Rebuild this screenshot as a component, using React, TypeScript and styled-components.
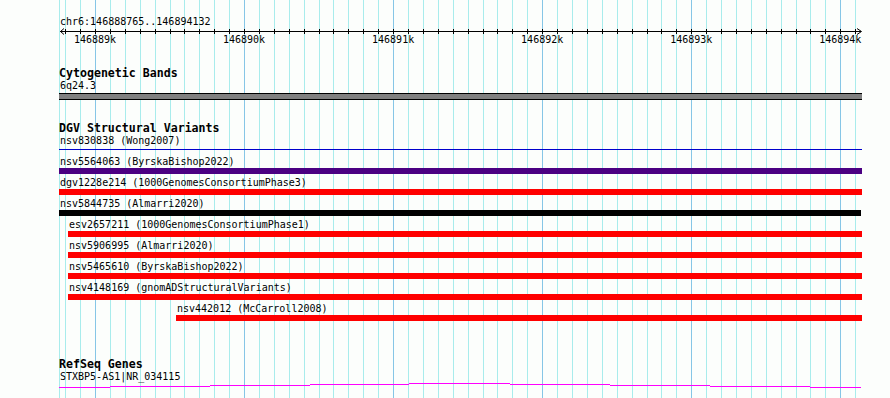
import React from 'react';
import styled, { createGlobalStyle } from 'styled-components';

const PANEL_W = 803;
const MAJOR0 = 36; // 146889k, panel-local x
const MINOR = 14.906;

const GlobalStyle = createGlobalStyle`
  html, body {
    margin: 0;
    padding: 0;
    background: #fcfefc;
  }
  body {
    font-family: "DejaVu Sans Mono", "Liberation Mono", monospace;
    color: #000;
  }
`;

const Page = styled.div`
  width: 890px;
  height: 398px;
  box-sizing: border-box;
  padding-left: 59px;
  overflow: hidden;
  background: #fcfefc;
`;

const Panel = styled.div`
  position: relative;
  width: ${PANEL_W}px;
  height: 398px;
`;

const GridLayer = styled.svg`
  position: absolute;
  left: 0;
  top: 0;
  display: block;
`;

const Tracks = styled.div`
  position: relative;
  display: flex;
  flex-direction: column;
  padding-top: 16px;
`;

const Label = styled.div`
  font-size: 10px;
  line-height: 12px;
  height: 12px;
  padding-left: 1px;
  white-space: nowrap;
`;

const RulerSvg = styled.svg`
  display: block;
  margin-top: 0;
  overflow: visible;
`;

const TrackTitle = styled.div<{ $gap: number }>`
  margin-top: ${(p) => p.$gap}px;
  font-size: 11.6px;
  line-height: 13px;
  height: 13px;
  font-weight: bold;
  white-space: nowrap;
`;

const BandBar = styled.div`
  margin-top: 1px;
  height: 5px;
  border-top: 1px solid #000;
  border-bottom: 1px solid #000;
  background: #808080;
`;

const Row = styled.div<{ $start: number; $end: number }>`
  display: flex;
  flex-direction: column;
  margin-left: ${(p) => p.$start}px;
  width: ${(p) => p.$end - p.$start}px;
  margin-bottom: 3px;
`;

const Bar = styled.div<{ $color: string }>`
  height: 6px;
  background: ${(p) => p.$color};
`;

const ThinLine = styled.div<{ $color: string }>`
  height: 1px;
  margin: 2px 0 3px;
  background: ${(p) => p.$color};
`;

const GeneSvg = styled.svg`
  display: block;
`;

type Variant = {
  label: string;
  start: number;
  end: number;
  color: string;
  thin?: boolean;
};

const variants: Variant[] = [
  { label: 'nsv830838 (Wong2007)', start: 0, end: 803, color: '#0000cc', thin: true },
  { label: 'nsv5564063 (ByrskaBishop2022)', start: 0, end: 803, color: '#4b0082' },
  { label: 'dgv1228e214 (1000GenomesConsortiumPhase3)', start: 0, end: 803, color: '#ff0000' },
  { label: 'nsv5844735 (Almarri2020)', start: 0, end: 802, color: '#000000' },
  { label: 'esv2657211 (1000GenomesConsortiumPhase1)', start: 9, end: 803, color: '#ff0000' },
  { label: 'nsv5906995 (Almarri2020)', start: 9, end: 803, color: '#ff0000' },
  { label: 'nsv5465610 (ByrskaBishop2022)', start: 9, end: 803, color: '#ff0000' },
  { label: 'nsv4148169 (gnomADStructuralVariants)', start: 9, end: 803, color: '#ff0000' },
  { label: 'nsv442012 (McCarroll2008)', start: 117, end: 803, color: '#ff0000' },
];

const majorLabels = ['146889k', '146890k', '146891k', '146892k', '146893k', '146894k'];

const gridXs = (() => {
  const out: { x: number; major: boolean }[] = [{ x: 0, major: false }];
  for (let k = -2; k < 60; k++) {
    const x = Math.round(MAJOR0 + k * MINOR);
    if (x <= 0 || x >= PANEL_W - 1) continue;
    out.push({ x, major: k % 10 === 0 });
  }
  return out;
})();

// stepped gene line: [x0, x1, row]
const geneSteps: [number, number, number][] = [
  [0, 51, 4],
  [51, 151, 3],
  [151, 251, 2],
  [251, 350, 1],
  [350, 451, 0],
  [451, 551, 1],
  [551, 651, 2],
  [651, 751, 3],
  [751, 802, 4],
];

const Grid = () => (
  <GridLayer width={PANEL_W} height={398} shapeRendering="crispEdges">
    {gridXs.map((g, i) => (
      <line
        key={i}
        x1={g.x + 0.5}
        x2={g.x + 0.5}
        y1={0}
        y2={398}
        stroke={g.major ? '#86c6e6' : '#a8ecec'}
        strokeWidth={1}
      />
    ))}
  </GridLayer>
);

const Ruler = () => (
  <RulerSvg width={PANEL_W} height={18} shapeRendering="crispEdges">
    <line x1={1} x2={802} y1={3.5} y2={3.5} stroke="#000" />
    <polyline points="5,0.5 1.5,3.5 5,6.5" fill="none" stroke="#000" shapeRendering="auto" />
    <polyline points="798,0.5 802.5,3.5 798,6.5" fill="none" stroke="#000" shapeRendering="auto" />
    {gridXs.slice(1).map((g, i) => (
      <line key={i} x1={g.x + 0.5} x2={g.x + 0.5} y1={1} y2={6} stroke="#000" />
    ))}
    {majorLabels.map((t, i) => (
      <text
        key={t}
        x={MAJOR0 + i * MINOR * 10}
        y={15}
        fontSize={10}
        textAnchor="middle"
        fontFamily='"DejaVu Sans Mono", "Liberation Mono", monospace'
        fill="#000"
      >
        {t}
      </text>
    ))}
  </RulerSvg>
);

const App: React.FC = () => {
  return (
    <Page>
      <GlobalStyle />
      <Panel>
        <Grid />
        <Tracks>
          <Label>chr6:146888765..146894132</Label>
          <Ruler />

          <TrackTitle $gap={21}>Cytogenetic Bands</TrackTitle>
          <Label>6q24.3</Label>
          <BandBar />

          <TrackTitle $gap={22}>DGV Structural Variants</TrackTitle>
          {variants.map((v) => (
            <Row key={v.label} $start={v.start} $end={v.end}>
              <Label>{v.label}</Label>
              {v.thin ? <ThinLine $color={v.color} /> : <Bar $color={v.color} />}
            </Row>
          ))}

          <TrackTitle $gap={34}>RefSeq Genes</TrackTitle>
          <Label>STXBP5-AS1|NR_034115</Label>
          <GeneSvg width={PANEL_W} height={6} shapeRendering="crispEdges">
            {geneSteps.map(([a, b, r]) => (
              <rect key={a} x={a} y={r} width={b - a} height={1} fill="#ff00ff" />
            ))}
          </GeneSvg>
        </Tracks>
      </Panel>
    </Page>
  );
};

export default App;
